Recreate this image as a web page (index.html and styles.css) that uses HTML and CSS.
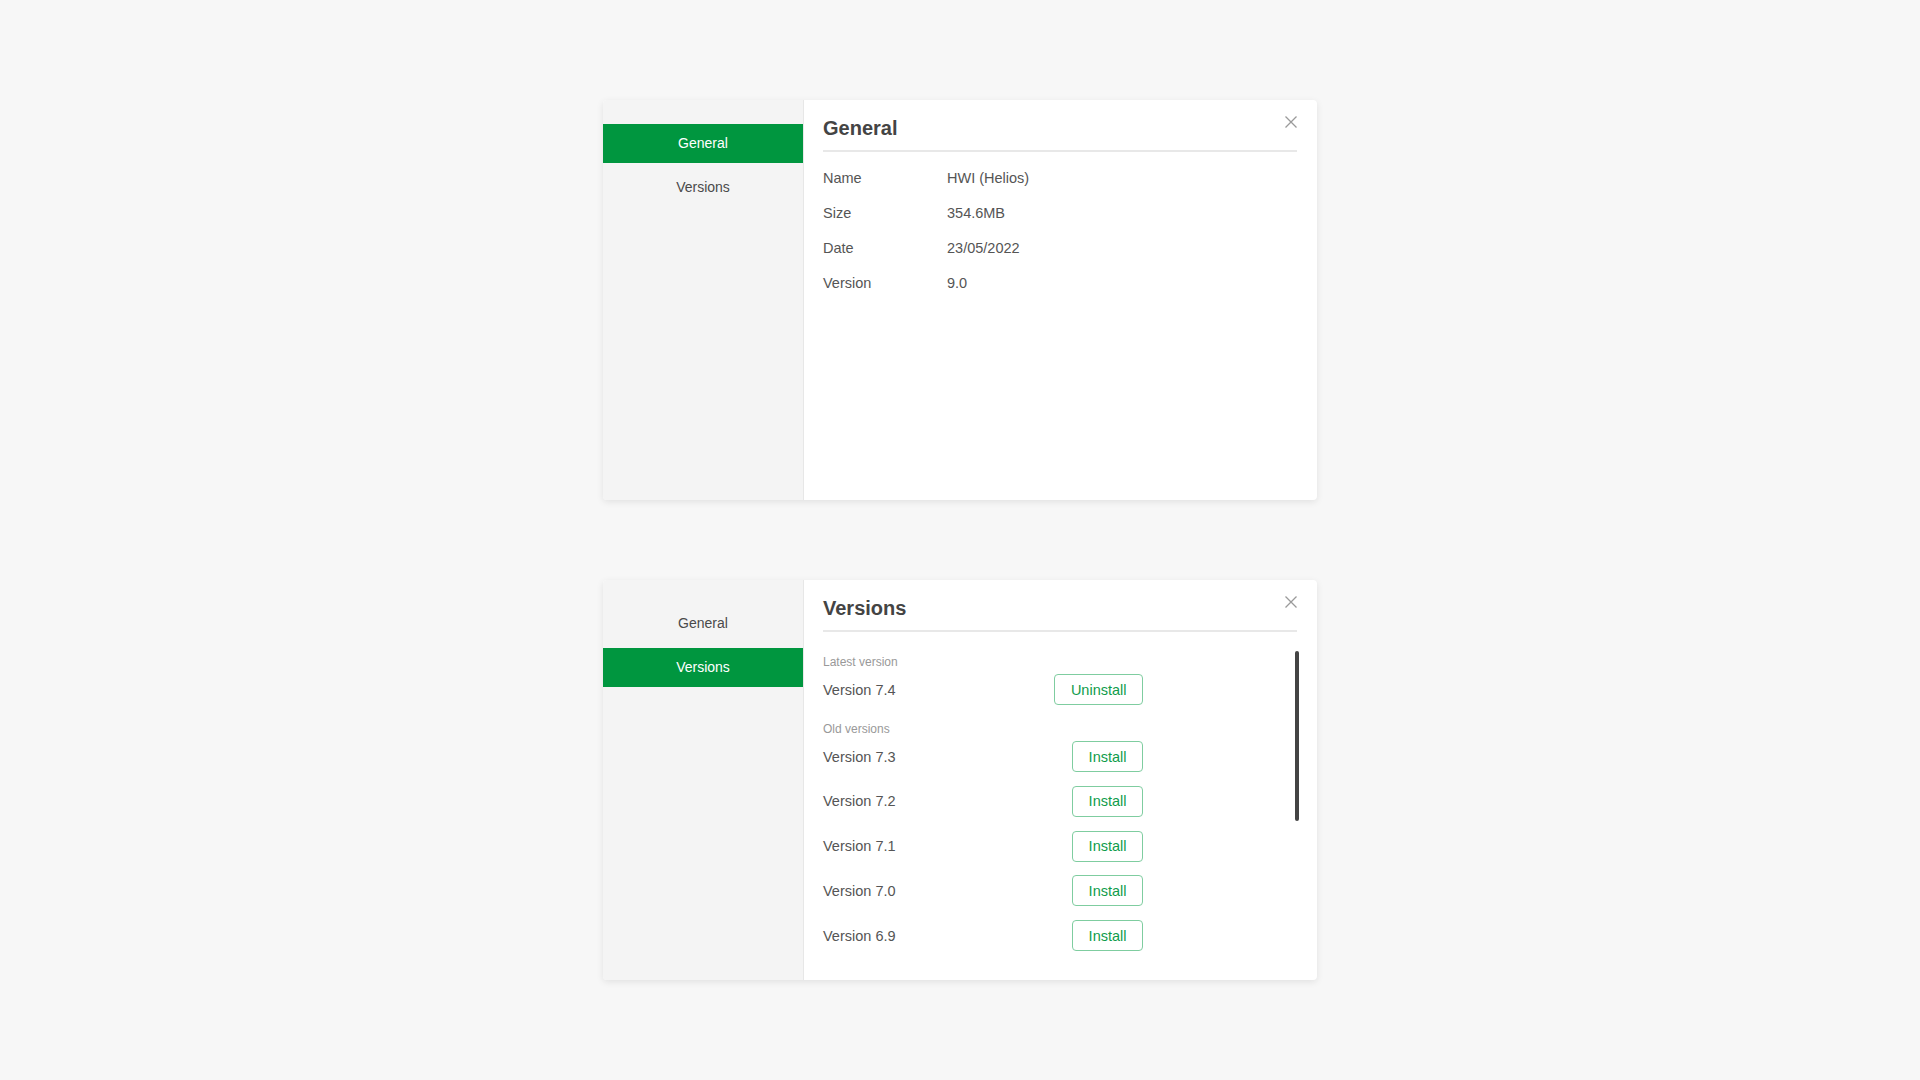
FILE: index.html
```html
<!DOCTYPE html>
<html>
<head>
    <title>Package Settings</title>
    <meta charset="utf-8">
    <link rel="stylesheet" href="styles.css">
</head>
<body>
<div class="page">

<div class="dialog">
	<div class="sidebar">
		<div class="tab active">General</div>
		<div class="tab">Versions</div>
	</div>
	<div class="panel">
		<h2 class="panel-title">General</h2>
		<a class="close" href="#">
			<svg width="12" height="12" viewBox="0 0 12 12"><path d="M0.5 0.5L11.5 11.5M11.5 0.5L0.5 11.5" stroke="#9a9a9a" stroke-width="1.3" fill="none"/></svg>
		</a>
		<div class="info">
			<div class="info-label">Name</div><div class="info-value">HWI (Helios)</div>
			<div class="info-label">Size</div><div class="info-value">354.6MB</div>
			<div class="info-label">Date</div><div class="info-value">23/05/2022</div>
			<div class="info-label">Version</div><div class="info-value">9.0</div>
		</div>
	</div>
</div>

<div class="dialog">
	<div class="sidebar">
		<div class="tab">General</div>
		<div class="tab active">Versions</div>
	</div>
	<div class="panel">
		<h2 class="panel-title">Versions</h2>
		<a class="close" href="#">
			<svg width="12" height="12" viewBox="0 0 12 12"><path d="M0.5 0.5L11.5 11.5M11.5 0.5L0.5 11.5" stroke="#9a9a9a" stroke-width="1.3" fill="none"/></svg>
		</a>
		<div class="versions">
			<div class="group">
				<div class="group-label">Latest version</div>
				<div class="row"><span>Version 7.4</span><button class="btn">Uninstall</button></div>
			</div>
			<div class="group">
				<div class="group-label">Old versions</div>
				<div class="row"><span>Version 7.3</span><button class="btn">Install</button></div>
				<div class="row"><span>Version 7.2</span><button class="btn">Install</button></div>
				<div class="row"><span>Version 7.1</span><button class="btn">Install</button></div>
				<div class="row"><span>Version 7.0</span><button class="btn">Install</button></div>
				<div class="row"><span>Version 6.9</span><button class="btn">Install</button></div>
			</div>
		</div>
		<div class="scroll-thumb"></div>
	</div>
</div>

</div>
</body>
</html>
```

FILE: styles.css
```css
* {
	box-sizing: border-box;
}

body {
	margin: 0;
	background: #f7f7f7;
	font-family: "Liberation Sans", Arial, Helvetica, sans-serif;
	color: #555;
}

.page {
	display: flex;
	flex-direction: column;
	align-items: center;
	gap: 80px;
	padding: 100px 0;
}

.dialog {
	display: flex;
	width: 714px;
	height: 400px;
	background: #fff;
	border-radius: 4px;
	box-shadow: 0 2px 7px rgba(0, 0, 0, 0.09);
	overflow: hidden;
}

/* left tabs */
.sidebar {
	width: 201px;
	flex-shrink: 0;
	display: flex;
	flex-direction: column;
	gap: 5px;
	padding-top: 24px;
	background: #f4f4f4;
	border-right: 1px solid #e7e7e7;
}

.tab {
	height: 39px;
	line-height: 39px;
	text-align: center;
	font-size: 14px;
	color: #4a4a4a;
	cursor: pointer;
}

.tab.active {
	background: #00963f;
	color: #fff;
}

/* right side */
.panel {
	position: relative;
	flex: 1;
	padding: 16px 20px 0 19px;
}

.panel-title {
	margin: 0;
	padding-bottom: 10px;
	border-bottom: 2px solid #e8e8e8;
	font-size: 20px;
	line-height: 24px;
	font-weight: bold;
	color: #444;
}

.close {
	position: absolute;
	top: 16px;
	right: 20px;
	width: 12px;
	height: 12px;
	display: block;
}

.close svg {
	display: block;
}

.info {
	display: grid;
	grid-template-columns: 124px 1fr;
	margin-top: 9px;
	font-size: 14.5px;
	line-height: 35px;
}

/* versions list */
.versions {
	width: 320px;
	margin-top: 19px;
	padding-top: 4px;
	font-size: 14.5px;
}

.group + .group {
	margin-top: 17px;
}

.group-label {
	font-size: 12px;
	line-height: 14px;
	color: #999;
	margin-bottom: 5px;
}

.row {
	display: flex;
	align-items: center;
	justify-content: space-between;
	height: 31px;
}

.row + .row {
	margin-top: 13.75px;
}

.btn {
	height: 31px;
	padding: 0 15.5px;
	border: 1px solid #7fcda0;
	border-radius: 4px;
	background: #fff;
	color: #109c4b;
	font-family: "Liberation Sans", Arial, Helvetica, sans-serif;
	font-size: 14.5px;
	cursor: pointer;
}

.scroll-thumb {
	position: absolute;
	top: 71px;
	right: 18px;
	width: 4px;
	height: 170px;
	border-radius: 2px;
	background: #444;
}
```
